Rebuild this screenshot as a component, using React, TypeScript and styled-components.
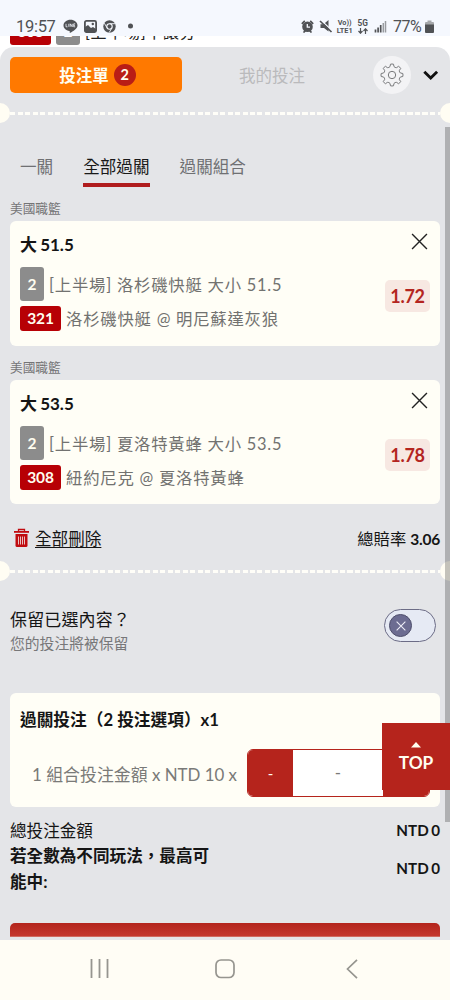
import React from "react";
import styled, { createGlobalStyle } from "styled-components";

const Global = createGlobalStyle`
  * { box-sizing: border-box; }
  body {
    margin: 0;
    background: #fff;
    font-family: Lato, "Noto Sans CJK TC", sans-serif;
    color: #151515;
    overflow: hidden;
  }
  button { font: inherit; border: 0; padding: 0; margin: 0; background: none; color: inherit; }
  svg { display: block; flex: none; }
`;

const Phone = styled.div`
  position: relative;
  width: 450px;
  height: 1000px;
  display: flex;
  flex-direction: column;
  overflow: hidden;
`;

const StatusBar = styled.header`
  height: 36px;
  flex: none;
  background: #f5f8fe;
  display: flex;
  align-items: center;
  padding: 16px 16px 0 16px;
  color: #505255;
  font-family: Roboto, sans-serif;
`;
const Clock = styled.span`
  font-size: 16.5px;
  letter-spacing: -0.3px;
  width: 47px;
`;
const StatusIcons = styled.div`
  display: flex;
  align-items: center;
  gap: 6px;
`;
const StatusRight = styled(StatusIcons)`
  margin-left: auto;
  gap: 0;
`;
const Network = styled.div<{ $size: number; $left: number }>`
  margin-left: ${(p) => p.$left}px;
  font-size: ${(p) => p.$size}px;
  line-height: 8px;
  font-weight: 700;
  display: flex;
  flex-direction: column;
  align-items: center;
  justify-content: space-between;
  height: 15px;
  white-space: nowrap;
`;
const Battery = styled.span`
  font-size: 16px;
  letter-spacing: -0.5px;
  width: 32px;
  margin-left: 6px;
`;

const Behind = styled.div`
  height: 11px;
  flex: none;
  display: flex;
  align-items: flex-end;
  gap: 5px;
  padding-left: 10px;
  overflow: hidden;
  background: #fff;
`;
const BehindItem = styled.span<{ $bg?: string; $w: number }>`
  width: ${(p) => p.$w}px;
  height: 24px;
  margin-bottom: 2px;
  border-radius: 3px;
  background: ${(p) => p.$bg || "transparent"};
  color: ${(p) => (p.$bg ? "#fff" : "#222")};
  font-size: ${(p) => (p.$bg ? 15 : 16)}px;
  font-weight: ${(p) => (p.$bg ? 700 : 400)};
  line-height: 21px;
  text-align: ${(p) => (p.$bg ? "center" : "left")};
  white-space: nowrap;
  letter-spacing: ${(p) => (p.$bg ? 0 : 0.7)}px;
`;

const Sheet = styled.main`
  flex: 1;
  min-height: 0;
  background: #e4e5e8;
  border-radius: 14px 14px 0 0;
  overflow: hidden;
`;
const TopTabs = styled.div`
  height: 56px;
  display: flex;
  align-items: center;
  padding: 0 10px;
`;
const SlipTab = styled.button`
  width: 172px;
  height: 36px;
  border-radius: 5px;
  background: #ff7900;
  color: #fffdf0;
  font-size: 16.5px;
  font-weight: 700;
  display: flex;
  align-items: center;
  justify-content: center;
  gap: 5px;
  padding-left: 3px;
`;
const Count = styled.span`
  width: 22px;
  height: 22px;
  border-radius: 50%;
  background: #b91d16;
  font-size: 14.5px;
  line-height: 22px;
`;
const MyBets = styled.button`
  width: 180px;
  text-align: center;
  font-size: 16.5px;
  color: #bababc;
`;
const GearButton = styled.button`
  width: 38px;
  height: 38px;
  margin-left: 11px;
  border-radius: 50%;
  background: #f3f3f5;
  display: grid;
  place-items: center;
`;
const Collapse = styled.button`
  margin-left: 12px;
`;

const Divider = styled.div`
  height: 20px;
  display: flex;
  justify-content: space-between;
  align-items: center;
  margin: 0 -10px;
`;
const Notch = styled.i`
  width: 20px;
  height: 20px;
  flex: none;
  border-radius: 50%;
  background: #fffdf3;
`;
const Dashes = styled.i`
  flex: 1;
  height: 3px;
  background: repeating-linear-gradient(90deg, #fffef8 0 5px, transparent 5px 7.5px);
`;

const ModeTabs = styled.nav`
  display: flex;
  gap: 30px;
  height: 64px;
  padding: 22.5px 20px 0;
  font-size: 16.6px;
`;
const Mode = styled.button<{ $on?: boolean }>`
  height: 41px;
  line-height: 42px;
  color: ${(p) => (p.$on ? "#191919" : "#6f7073")};
  border-bottom: 4px solid ${(p) => (p.$on ? "#b01c1e" : "transparent")};
`;
const League = styled.div`
  height: 34px;
  padding-left: 10px;
  padding-top: 11px;
  font-size: 12.7px;
  line-height: 20px;
  color: #747476;
`;
const Card = styled.article<{ $h: number }>`
  height: ${(p) => p.$h}px;
  margin: 0 10px;
  border-radius: 6px;
  background: #fffef6;
  padding: 10px 10px 0;
`;
const PickHead = styled.div`
  display: flex;
  justify-content: space-between;
  height: 35px;
  font-size: 17px;
  line-height: 28px;
  font-weight: 700;
  word-spacing: -1px;
  & svg { margin: 2px 2px 0 0; }
`;
const PickBody = styled.div`
  display: flex;
  justify-content: space-between;
`;
const Line = styled.div<{ $h: number }>`
  height: ${(p) => p.$h}px;
  display: flex;
  align-items: center;
  gap: 5px;
  font-size: 16.4px;
  letter-spacing: 0.75px;
  color: #727270;
  white-space: nowrap;
`;
const LineText = styled.span`
  margin-top: -1px;
`;
const Tag = styled.span<{ $red?: boolean }>`
  width: ${(p) => (p.$red ? 41 : 24)}px;
  height: ${(p) => (p.$red ? 25 : 34)}px;
  line-height: ${(p) => (p.$red ? 25 : 34)}px;
  border-radius: 3px;
  background: ${(p) => (p.$red ? "#b70005" : "#8c8c8c")};
  color: #fffdf0;
  font-size: 15.5px;
  font-weight: 700;
  letter-spacing: -0.2px;
  text-align: center;
`;
const Odds = styled.span`
  width: 45px;
  height: 32px;
  margin-top: 14px;
  border-radius: 5px;
  background: #f7e8e2;
  color: #b4251f;
  font-weight: 700;
  font-size: 18px;
  letter-spacing: -0.3px;
  line-height: 32px;
  text-align: center;
`;

const Summary = styled.div`
  height: 57px;
  padding: 11px 10px 0 13px;
  display: flex;
  align-items: center;
  font-size: 16.6px;
`;
const DeleteAll = styled.button`
  display: flex;
  align-items: center;
  gap: 5px;
  text-decoration: underline;
  text-underline-offset: 2px;
`;
const TotalOdds = styled.span`
  margin-left: auto;
  font-size: 16.3px;
  & b { font-size: 15.5px; letter-spacing: -0.25px; }
`;

const Keep = styled.section`
  height: 112px;
  padding: 27px 14px 0 10px;
  display: flex;
  justify-content: space-between;
`;
const KeepTitle = styled.div`
  font-size: 17px;
  line-height: 24px;
  letter-spacing: 0.15px;
`;
const KeepNote = styled.div`
  font-size: 14.8px;
  line-height: 23px;
  color: #777779;
`;
const Toggle = styled.button`
  width: 52px;
  height: 33px;
  border: 1px solid #6c6c86;
  border-radius: 17px;
  background: #e6eaf4;
  padding-left: 4px;
  display: flex;
  align-items: center;
  margin-top: 1px;
`;
const Knob = styled.span`
  width: 23px;
  height: 23px;
  border-radius: 50%;
  background: #6c6c91;
  border: 1.5px solid #4f4f6c;
  display: grid;
  place-items: center;
`;

const ParlayTitle = styled.div`
  font-size: 16.7px;
  font-weight: 700;
  line-height: 35px;
  height: 46px;
`;
const StakeRow = styled.div`
  display: flex;
  align-items: center;
  justify-content: flex-end;
  gap: 10px;
  font-size: 16.9px;
  color: #7a7a78;
  white-space: nowrap;
`;
const Stepper = styled.div`
  width: 183px;
  height: 48px;
  flex: none;
  border: 1px solid #b5241c;
  border-radius: 6px;
  overflow: hidden;
  display: grid;
  grid-template-columns: 45px 1fr 46px;
  background: #fff;
  text-align: center;
  line-height: 46px;
`;
const Step = styled.button`
  background: #b5241c;
  color: #fffdf0;
  font-size: 15px;
`;
const PlusStep = styled(Step)`
  line-height: 20px;
  padding-top: 20px;
`;

const Totals = styled.dl`
  margin: 0;
  padding: 11px 10px 0;
  height: 116px;
  font-size: 16.6px;
`;
const TotalRow = styled.div<{ $bold?: boolean }>`
  display: flex;
  align-items: center;
  justify-content: space-between;
  line-height: ${(p) => (p.$bold ? 25.5 : 25)}px;
  font-weight: ${(p) => (p.$bold ? 700 : 400)};
  & dt { width: 204px; position: relative; top: 1px; }
  & dd { margin: 0; font-weight: 700; font-size: 15.2px; word-spacing: -1.2px; }
`;
const Submit = styled.div`
  height: 14px;
  margin: 0 10px;
  border-radius: 5px 5px 0 0;
  background: linear-gradient(#b3241c, #c4382e);
  border-bottom: 1px solid #cf6a60;
`;

const SystemNav = styled.footer`
  height: 60px;
  flex: none;
  background: #fffdf5;
  display: grid;
  grid-template-columns: 19px 20px 12px;
  column-gap: 106px;
  align-items: center;
  padding: 0 0 2px 90px;
  & svg:last-child { margin-left: 5px; }
`;

const ScrollThumb = styled.div`
  position: absolute;
  right: 0;
  top: 127px;
  width: 5px;
  height: 695px;
  background: rgba(0, 0, 0, 0.23);
`;
const TopButton = styled.button`
  position: absolute;
  right: 0;
  top: 723px;
  width: 68px;
  height: 67px;
  background: #b5241c;
  color: #fffdf0;
  font-size: 17.3px;
  line-height: 22px;
  font-weight: 700;
  display: flex;
  flex-direction: column;
  align-items: center;
  padding-top: 19px;
  gap: 4px;
`;

function Cross({ size, color, w }: { size: number; color: string; w: number }) {
  return (
    <svg width={size} height={size} viewBox="0 0 16 16">
      <path d="M1 1 15 15M15 1 1 15" stroke={color} strokeWidth={w} fill="none" />
    </svg>
  );
}

function Perforation() {
  return (
    <Divider>
      <Notch />
      <Dashes />
      <Notch />
    </Divider>
  );
}

function gearPath() {
  const pts: string[] = [];
  const at = (r: number, deg: number) => {
    const a = (deg * Math.PI) / 180;
    return `${(12 + r * Math.sin(a)).toFixed(2)} ${(12 - r * Math.cos(a)).toFixed(2)}`;
  };
  for (let i = 0; i < 8; i++) {
    const c = i * 45;
    pts.push(`${i ? "L" : "M"}${at(8.7, c - 13)}L${at(10.9, c - 8)}Q${at(11.2, c)} ${at(10.9, c + 8)}L${at(8.7, c + 13)}Q${at(7.7, c + 22.5)} ${at(8.7, c + 32)}`);
  }
  return pts.join("") + "Z";
}

interface PickData {
  title: string;
  market: string;
  code: string;
  match: string;
  odds: string;
  height: number;
}

function Pick({ title, market, code, match, odds, height }: PickData) {
  return (
    <>
      <League>美國職籃</League>
      <Card $h={height}>
        <PickHead>
          {title}
          <Cross size={17} color="#222" w={1.3} />
        </PickHead>
        <PickBody>
          <div>
            <Line $h={36}>
              <Tag>2</Tag>
              <LineText>{market}</LineText>
            </Line>
            <Line $h={33}>
              <Tag $red>{code}</Tag>
              <LineText>{match}</LineText>
            </Line>
          </div>
          <Odds>{odds}</Odds>
        </PickBody>
      </Card>
    </>
  );
}

const picks: PickData[] = [
  { title: "大 51.5", market: "[上半場] 洛杉磯快艇 大小 51.5", code: "321", match: "洛杉磯快艇 @ 明尼蘇達灰狼", odds: "1.72", height: 125 },
  { title: "大 53.5", market: "[上半場] 夏洛特黃蜂 大小 53.5", code: "308", match: "紐約尼克 @ 夏洛特黃蜂", odds: "1.78", height: 124 },
];

export default function App() {
  return (
    <Phone>
      <Global />
      <StatusBar>
        <Clock>19:57</Clock>
        <StatusIcons>
          <svg width="15" height="15" viewBox="0 0 15 15">
            <path d="M7.5 .8C3.6.8.5 3.3.5 6.4c0 2.8 2.4 5 5.8 5.5.5.1.7.5.4 2.2 3.6-2 7.8-4.4 7.8-7.7C14.5 3.3 11.4.8 7.5.8Z" fill="#505255" />
            <path d="M3 4.8v3h1.500M5.800 4.800v3M7.200 7.800v-3l2 3v-3M12.200 4.800h-1.500v3h1.500M10.700 6.300h1.300" stroke="#f5f8fe" strokeWidth=".8" fill="none" />
          </svg>
          <svg width="13" height="13" viewBox="0 0 13 13">
            <rect x=".9" y=".9" width="11.2" height="11.2" rx="1.5" fill="none" stroke="#505255" strokeWidth="1.8" />
            <path d="M1 7 4 5l3 3 2-1 3 2v3H1Z" fill="#505255" />
            <circle cx="8.8" cy="4" r="1.2" fill="#505255" />
          </svg>
          <svg width="13" height="13" viewBox="0 0 13 13">
            <circle cx="6.5" cy="6.5" r="6.2" fill="#505255" />
            <circle cx="6.5" cy="6.5" r="2.7" fill="none" stroke="#f5f8fe" strokeWidth="1.1" />
            <path d="M6.5 3.7H12M4.1 7.9 1.3 3.2M8.9 7.9 6.2 12.6" stroke="#f5f8fe" strokeWidth=".9" />
          </svg>
          <svg width="17" height="6" viewBox="0 0 17 6">
            <circle cx="8.5" cy="3" r="2.500" fill="#505255" />
          </svg>
        </StatusIcons>
        <StatusRight>
          <svg width="13" height="13" viewBox="0 0 13 13">
            <circle cx="6.5" cy="6.8" r="5.3" fill="#505255" />
            <path d="M.8 3.800 3.800.8M12.200 3.800 9.200.8M2.500 12.500l2-2M10.500 12.500l-2-2" stroke="#505255" strokeWidth="1.7" />
            <path d="M6.300 4v3.200H9" stroke="#f5f8fe" strokeWidth="1.3" fill="none" />
          </svg>
          <svg width="20" height="14" viewBox="0 0 20 14">
            <path d="M6.500 5.300h3L14.500 1v11.500L10 9H6.500Z" fill="#505255" />
            <path d="M6.800 1 18.500 12" stroke="#f5f8fe" strokeWidth="1.2" />
            <path d="M6 2 17.500 13" stroke="#505255" strokeWidth="1.7" />
          </svg>
          <Network $size={7.3} $left={3}>
            <span>Vo))</span>
            <span>LTE1</span>
          </Network>
          <Network $size={8.3} $left={5}>
            <span>5G</span>
            <svg width="10" height="6" viewBox="0 0 10 6">
              <path d="M2.500 0v5M.5 3l2 2.200 2-2.200M7.500 6V1M5.500 3l2-2.200 2 2.200" fill="none" stroke="#505255" strokeWidth="1.2" />
            </svg>
          </Network>
          <svg width="19" height="13" viewBox="0 0 19 13">
            <path d="M7.500 12.500V9.500M10.100 12.500V7.500M12.700 12.500V5" stroke="#505255" strokeWidth="1.7" />
            <path d="M15.300 12.500V3M17.500 12.500V1" stroke="#989b9f" strokeWidth="1.5" />
          </svg>
          <Battery>77%</Battery>
          <svg width="9" height="13" viewBox="0 0 9 13">
            <path d="M2.500.5h4V2H8q1 0 1 1v2H0V3q0-1 1-1h1.500Z" fill="#a6a8ab" />
            <path d="M0 4.500h9V12q0 1-1 1H1q-1 0-1-1Z" fill="#505255" />
          </svg>
        </StatusRight>
      </StatusBar>
      <Behind>
        <BehindItem $bg="#b70005" $w={41}>308</BehindItem>
        <BehindItem $bg="#8c8c8c" $w={24}>2</BehindItem>
        <BehindItem $w={130}>[上半場]不讓分</BehindItem>
      </Behind>

      <Sheet>
        <TopTabs>
          <SlipTab>
            投注單<Count>2</Count>
          </SlipTab>
          <MyBets>我的投注</MyBets>
          <GearButton>
            <svg width="24" height="24" viewBox="0 0 24 24" fill="none" stroke="#77787a" strokeWidth="1">
              <path d={gearPath()} />
              <circle cx="12" cy="12" r="3.7" />
            </svg>
          </GearButton>
          <Collapse>
            <svg width="16" height="10" viewBox="0 0 16 10">
              <path d="M1.300 1.800 7.700 8l6.400-6.200" fill="none" stroke="#111" strokeWidth="2.9" />
            </svg>
          </Collapse>
        </TopTabs>
        <Perforation />
        <ModeTabs>
          <Mode>一關</Mode>
          <Mode $on>全部過關</Mode>
          <Mode>過關組合</Mode>
        </ModeTabs>
        {picks.map((p) => (
          <Pick key={p.code} {...p} />
        ))}
        <Summary>
          <DeleteAll>
            <svg width="17" height="20" viewBox="0 0 17 20">
              <path d="M5.500 3V1.500h6V3" fill="none" stroke="#c00c10" strokeWidth="1.3" />
              <path d="M1 3h15v1.800H1Z" fill="#c00c10" />
              <path d="M2.500 6h12v11.500q0 1.500-1.500 1.500H4q-1.500 0-1.500-1.500Z" fill="#c00c10" />
              <path d="M5.500 8.500v8M7.500 8.500v8M9.500 8.500v8M11.500 8.500v8" stroke="#ecd5d6" strokeWidth=".9" />
            </svg>
            全部刪除
          </DeleteAll>
          <TotalOdds>
            總賠率 <b>3.06</b>
          </TotalOdds>
        </Summary>
        <Perforation />
        <Keep>
          <div>
            <KeepTitle>保留已選內容？</KeepTitle>
            <KeepNote>您的投注將被保留</KeepNote>
          </div>
          <Toggle>
            <Knob>
              <Cross size={10} color="#eeeef8" w={1.7} />
            </Knob>
          </Toggle>
        </Keep>
        <Card $h={114}>
          <ParlayTitle>過關投注（2 投注選項）x1</ParlayTitle>
          <StakeRow>
            1 組合投注金額 x NTD 10 x
            <Stepper>
              <Step>-</Step>
              <span>-</span>
              <PlusStep />
            </Stepper>
          </StakeRow>
        </Card>
        <Totals>
          <TotalRow>
            <dt>總投注金額</dt>
            <dd>NTD 0</dd>
          </TotalRow>
          <TotalRow $bold>
            <dt>若全數為不同玩法，最高可能中:</dt>
            <dd>NTD 0</dd>
          </TotalRow>
        </Totals>
        <Submit />
      </Sheet>

      <SystemNav>
        <svg width="19" height="20" viewBox="0 0 19 20">
          <path d="M1.500 0v19M9.500 0v19M17.500 0v19" stroke="#96958f" strokeWidth="1.8" />
        </svg>
        <svg width="20" height="20" viewBox="0 0 20 20">
          <rect x="1" y="1" width="18" height="17.5" rx="5" fill="none" stroke="#96958f" strokeWidth="1.7" />
        </svg>
        <svg width="12" height="20" viewBox="0 0 12 20">
          <path d="M11 .8 1.500 10l9.500 9.200" fill="none" stroke="#96958f" strokeWidth="1.7" />
        </svg>
      </SystemNav>

      <ScrollThumb />
      <TopButton>
        <svg width="10" height="6" viewBox="0 0 10 6">
          <path d="M0 5.500 5 0l5 5.500Z" fill="#fffdf0" />
        </svg>
        TOP
      </TopButton>
    </Phone>
  );
}
